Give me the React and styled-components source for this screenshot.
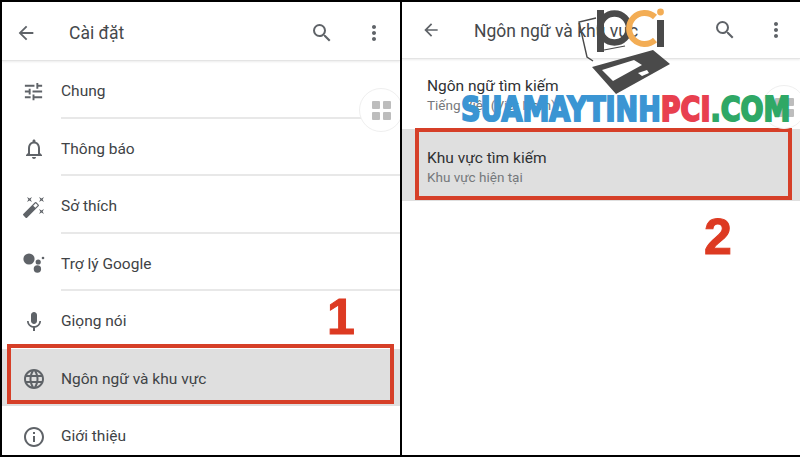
import React from "react";
import styled, { createGlobalStyle } from "styled-components";
import { MdArrowBack, MdSearch, MdMoreVert, MdTune, MdNotificationsNone, MdAutoFixHigh, MdMic, MdLanguage, MdInfoOutline } from "react-icons/md";

const Global = createGlobalStyle`
  html, body { margin: 0; padding: 0; background: #000; }
  body { font-family: Roboto, "Noto Sans", sans-serif; }
`;

const Page = styled.div`
  width: 800px;
  height: 457px;
  box-sizing: border-box;
  padding: 2px 0 2px 2px;
  background: #000;
  display: grid;
  grid-template-columns: 398px 398px;
  column-gap: 2px;
  overflow: hidden;
  position: relative;
`;

const Panel = styled.section`
  background: #fff;
  position: relative;
  overflow: hidden;
  color: #3c4043;
`;

const Header = styled.header`
  height: ${(p) => p.$h}px;
  box-sizing: border-box;
  display: flex;
  align-items: center;
  padding: ${(p) => p.$top}px ${(p) => p.$right}px 0 ${(p) => p.$left}px;
  border-bottom: 1px solid #e4e4e4;
  box-shadow: 0 1px 2px rgba(0, 0, 0, 0.08);
  color: #5f6368;
`;

const Title = styled.h1`
  margin: ${(p) => p.$dy}px 0 0 ${(p) => p.$gap}px;
  font-size: ${(p) => p.$size}px;
  font-weight: 400;
  color: #45484b;
  flex: 1;
  white-space: nowrap;
`;

const HeaderIcons = styled.div`
  display: flex;
  align-items: center;
  gap: ${(p) => p.$gap}px;
`;

const Row = styled.div`
  height: 57.5px;
  box-sizing: border-box;
  padding-top: 2px;
  display: flex;
  align-items: center;
  position: relative;
  background: ${(p) => (p.$active ? "#dfdfdf" : "transparent")};
`;

const IconSlot = styled.div`
  width: 59px;
  padding: 2px 0 0 20px;
  box-sizing: border-box;
  flex: none;
  display: flex;
  color: #5f6368;
`;

const RowText = styled.div`
  flex: 1;
  align-self: stretch;
  box-sizing: border-box;
  display: flex;
  align-items: center;
  font-size: 15.5px;
  color: #404346;
  padding-top: ${(p) => (p.$line ? 3 : 1)}px;
  border-bottom: ${(p) => (p.$line ? "2px solid #e8e8e8" : "none")};
`;

const RedFrame = styled.div`
  position: absolute;
  box-sizing: border-box;
  left: ${(p) => p.$l}px;
  right: ${(p) => p.$r}px;
  top: ${(p) => p.$t}px;
  bottom: ${(p) => p.$b}px;
  border: 4px solid #d63f28;
`;

const Step = styled.div`
  position: absolute;
  left: ${(p) => p.$x}px;
  top: ${(p) => p.$y}px;
  font-family: "Liberation Sans", Arial, sans-serif;
  font-weight: 700;
  font-size: 50px;
  line-height: 50px;
  color: #dd3a22;
  -webkit-text-stroke: 1px #dd3a22;
`;

const Fab = styled.div`
  position: absolute;
  left: ${(p) => p.$x}px;
  top: ${(p) => p.$y}px;
  width: 42px;
  height: 42px;
  border-radius: 50%;
  background: #fff;
  border: 1px solid #efefef;
  display: grid;
  grid-template-columns: 8px 8px;
  grid-auto-rows: 8px;
  gap: 3px;
  justify-content: center;
  align-content: center;
`;

const FabDot = styled.i`
  display: block;
  background: #bdbdbd;
  border-radius: 1px;
`;

const PrefRow = styled.div`
  height: ${(p) => p.$h}px;
  box-sizing: border-box;
  padding: ${(p) => p.$pt}px 0 0 25px;
  position: relative;
  background: ${(p) => (p.$active ? "#dfdfdf" : "transparent")};
`;

const PrefTitle = styled.div`
  font-size: 15.5px;
  line-height: 20px;
  color: #2f3133;
`;

const PrefSub = styled.div`
  font-size: 13.5px;
  line-height: 18px;
  color: #75787b;
`;

const Watermark = styled.div`
  position: absolute;
  left: 461px;
  top: 91px;
  font-family: "DejaVu Sans", sans-serif;
  font-weight: 700;
  font-size: 33px;
  line-height: 38px;
  white-space: nowrap;
  transform: scaleX(0.818);
  transform-origin: left center;
  -webkit-text-stroke: 2px currentColor;
  color: #3b95d3;
`;

const WmPart = styled.span`
  color: ${(p) => p.$c};
`;

const Logo = styled.svg`
  position: absolute;
  left: 570px;
  top: 0;
`;

const Assistant = () => (
  <svg width="24" height="24" viewBox="0 0 24 24" fill="#5f6368">
    <circle cx="7" cy="7" r="5.6" />
    <circle cx="16.2" cy="10" r="2.6" />
    <circle cx="15.4" cy="17" r="3.7" />
    <circle cx="21" cy="6" r="1.3" />
  </svg>
);

const rows = [
  ["Chung", <MdTune size={23} />],
  ["Thông báo", <MdNotificationsNone size={24} />],
  ["Sở thích", <MdAutoFixHigh size={24} />],
  ["Trợ lý Google", <Assistant />],
  ["Giọng nói", <MdMic size={24} />],
  ["Ngôn ngữ và khu vực", <MdLanguage size={24} />],
  ["Giới thiệu", <MdInfoOutline size={24} />],
];

const PciLogo = () => (
  <Logo width="120" height="110" viewBox="570 0 120 110">
    <rect x="597" y="10" width="7" height="42" fill="#4a4a4a" />
    <circle cx="614.5" cy="28" r="14.5" fill="none" stroke="#4a4a4a" strokeWidth="6.5" />
    <path d="M655 17 A15.5 15.5 0 1 0 655 40" fill="none" stroke="#f3ad55" strokeWidth="6" />
    <rect x="657" y="20" width="7" height="27" fill="#4a4a4a" />
    <circle cx="660.5" cy="12" r="3.4" fill="#f3ad55" />
    <path d="M596 18 L579 22 L587 57 L593 61" fill="none" stroke="#4a4a4a" strokeWidth="1.4" />
    <path d="M604 50 L625 46" fill="none" stroke="#4a4a4a" strokeWidth="1.2" />
    <path fillRule="evenodd" fill="#4a4a4a" d="M592 67 L653 50 L670 64 L616 94 Z M602 70 L634 60 L642 65 L613 81 Z M638 73 L647 70 L649 73 L642 76 Z" />
  </Logo>
);

export default function App() {
  return (
    <Page>
      <Global />
      <Panel>
        <Header $h={59} $top={4} $left={13} $right={14}>
          <MdArrowBack size={22} />
          <Title $dy={0} $gap={32} $size={17.5}>Cài đặt</Title>
          <HeaderIcons $gap={28}>
            <MdSearch size={24} />
            <MdMoreVert size={24} />
          </HeaderIcons>
        </Header>
        {rows.map(([label, icon], i) => (
          <Row key={label} $active={i === 5}>
            <IconSlot>{icon}</IconSlot>
            <RowText $line={i < 4}>{label}</RowText>
            {i === 5 && <RedFrame $l={5} $r={6} $t={-5} $b={2} />}
          </Row>
        ))}
        <Fab $x={357} $y={86}>
          <FabDot /><FabDot /><FabDot /><FabDot />
        </Fab>
        <Step $x={325} $y={290}>1</Step>
      </Panel>
      <Panel>
        <Header $h={57} $top={0} $left={19} $right={12}>
          <MdArrowBack size={20} />
          <Title $dy={1} $gap={33} $size={17.5}>Ngôn ngữ và khu vực</Title>
          <HeaderIcons $gap={27}>
            <MdSearch size={24} />
            <MdMoreVert size={24} />
          </HeaderIcons>
        </Header>
        <PrefRow $h={70} $pt={17}>
          <PrefTitle>Ngôn ngữ tìm kiếm</PrefTitle>
          <PrefSub>Tiếng Việt (Việt Nam)</PrefSub>
        </PrefRow>
        <PrefRow $h={72} $active $pt={19}>
          <PrefTitle>Khu vực tìm kiếm</PrefTitle>
          <PrefSub>Khu vực hiện tại</PrefSub>
          <RedFrame $l={13} $r={8} $t={-1} $b={1} />
        </PrefRow>
        <Fab $x={360} $y={83}>
          <FabDot /><FabDot /><FabDot /><FabDot />
        </Fab>
        <Step $x={302} $y={210}>2</Step>
      </Panel>
      <PciLogo />
      <Watermark>
        SUAMAYTINH<WmPart $c="#e8404f">PCI</WmPart><WmPart $c="#2fa866">.COM</WmPart>
      </Watermark>
    </Page>
  );
}
